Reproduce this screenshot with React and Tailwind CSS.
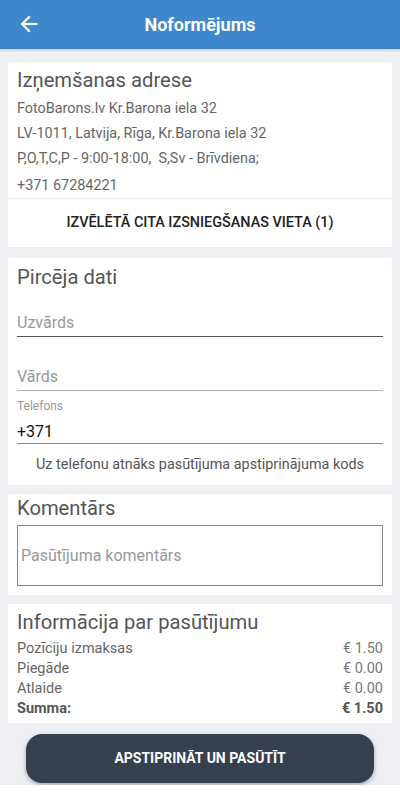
import React from "react";

const font = { fontFamily: "Roboto, 'Noto Sans', sans-serif" };

function Card({ className = "", children }) {
  return <div className={`mx-2 bg-white ${className}`}>{children}</div>;
}

export default function App() {
  const rows = [
    { label: "Pozīciju izmaksas", value: "€ 1.50" },
    { label: "Piegāde", value: "€ 0.00" },
    { label: "Atlaide", value: "€ 0.00" },
  ];

  return (
    <div style={font} className="w-[400px] bg-white">
      <div className="bg-[#eeeff3] pb-[2px]">
        {/* Header */}
        <div className="h-[49px] bg-[#3d88ca] flex items-center relative shadow-[0_1px_3px_rgba(0,0,0,0.2)]">
          <button className="absolute left-[18px] top-[13px] text-white">
            <svg width="22" height="22" viewBox="0 0 24 24" fill="none" stroke="currentColor" strokeWidth="2.4" strokeLinecap="square">
              <path d="M20 12H5" />
              <path d="M12 4.5L4.5 12L12 19.5" />
            </svg>
          </button>
          <h1 className="w-full text-center text-white font-bold text-[18px] leading-[24px]">Noformējums</h1>
        </div>

        {/* Pickup address */}
        <Card className="mt-[13px]">
          <div className="px-[9px] pt-[4px]">
            <h2 className="text-[20.2px] leading-[28px] text-[#555]">Izņemšanas adrese</h2>
            <div className="mt-[2px] text-[14.4px] leading-[25px] text-[#666]">
              <p>FotoBarons.lv Kr.Barona iela 32</p>
              <p>LV-1011, Latvija, Rīga, Kr.Barona iela 32</p>
              <p className="whitespace-pre">P,O,T,C,P - 9:00-18:00,  S,Sv - Brīvdiena;</p>
              <p className="mt-[2px]">+371 67284221</p>
            </div>
          </div>
          <div className="border-t border-[#eeeeee] h-[49px] flex items-center justify-center">
            <span className="text-[14.4px] font-medium text-[#222]">IZVĒLĒTĀ CITA IZSNIEGŠANAS VIETA (1)</span>
          </div>
        </Card>

        {/* Buyer data */}
        <Card className="mt-[11px]">
          <div className="px-[9px] pt-[5px] pb-[10px]">
            <h2 className="text-[20.2px] leading-[28px] text-[#555]">Pircēja dati</h2>
            <div className="mt-[22px] border-b border-[#555] pb-[3px] text-[16px] leading-[20px] text-[#999]">Uzvārds</div>
            <div className="mt-[30px] border-b border-[#aaa] pb-[3px] text-[16px] leading-[20px] text-[#999]">Vārds</div>
            <div className="mt-[7px] text-[12px] leading-[16px] text-[#999]">Telefons</div>
            <div className="mt-[8px] border-b border-[#888] pb-[1px] text-[16px] leading-[20px] text-[#111]">+371</div>
            <p className="mt-[11px] text-center text-[14.4px] leading-[20px] text-[#555]">Uz telefonu atnāks pasūtījuma apstiprinājuma kods</p>
          </div>
        </Card>

        {/* Comment */}
        <Card className="mt-[9px]">
          <div className="px-[9px] pt-[1px] pb-[9px]">
            <h2 className="text-[20.2px] leading-[26px] text-[#555]">Komentārs</h2>
            <div className="mt-[4px] h-[61px] border-[1.5px] border-[#888] flex items-center px-[3px]">
              <span className="text-[16px] text-[#999]">Pasūtījuma komentārs</span>
            </div>
          </div>
        </Card>

        {/* Order info */}
        <Card className="mt-[9px]">
          <div className="px-[9px] pt-[6px] pb-[4px]">
            <h2 className="text-[20.2px] leading-[24px] text-[#555]">Informācija par pasūtījumu</h2>
            <div className="mt-[5px] text-[14.5px] leading-[20px] text-[#666]">
              {rows.map((r) => (
                <div key={r.label} className="flex justify-between">
                  <span>{r.label}</span>
                  <span className="text-[#777]">{r.value}</span>
                </div>
              ))}
              <div className="flex justify-between font-bold text-[#555]">
                <span>Summa:</span>
                <span>€ 1.50</span>
              </div>
            </div>
          </div>
        </Card>

        {/* Confirm */}
        <div className="px-[26px] mt-[11px]">
          <button className="w-full h-[49px] rounded-[16px] bg-[#36404f] text-white font-bold text-[14px] shadow-[0_2px_4px_rgba(0,0,0,0.3)]">
            APSTIPRINĀT UN PASŪTĪT
          </button>
        </div>
      </div>
    </div>
  );
}
